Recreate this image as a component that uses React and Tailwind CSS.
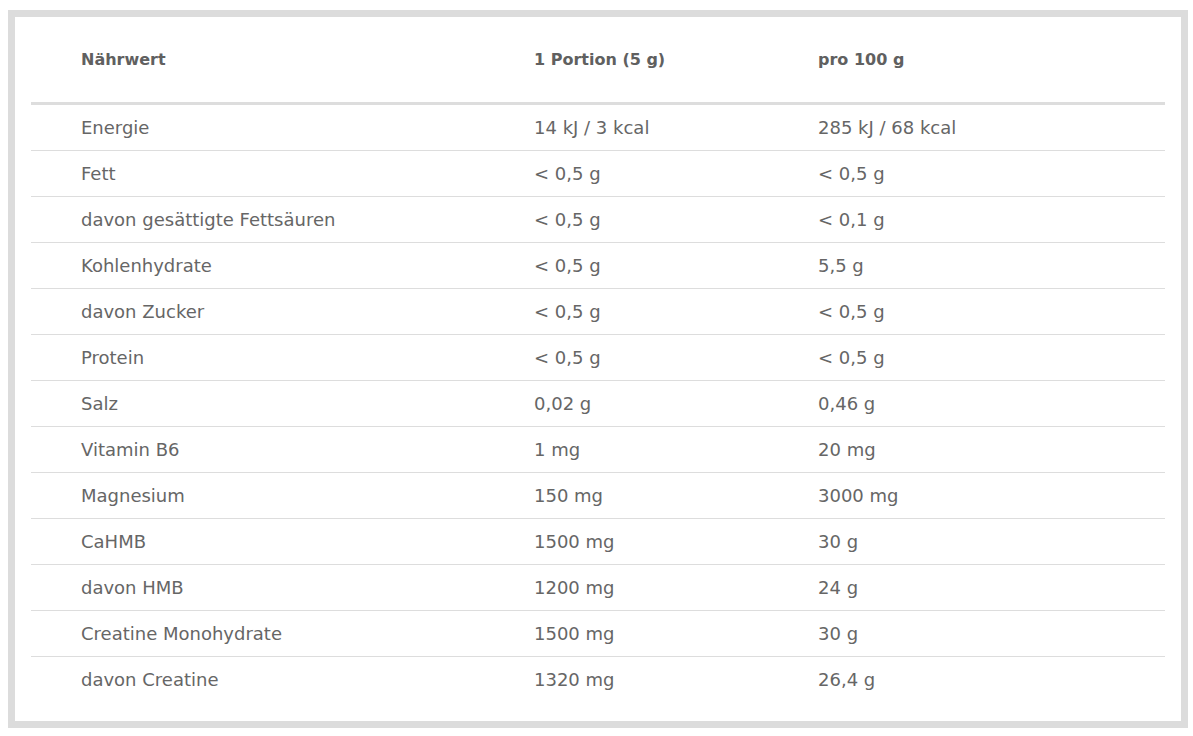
import React from "react";

const rows = [
  ["Energie", "14 kJ / 3 kcal", "285 kJ / 68 kcal"],
  ["Fett", "< 0,5 g", "< 0,5 g"],
  ["davon gesättigte Fettsäuren", "< 0,5 g", "< 0,1 g"],
  ["Kohlenhydrate", "< 0,5 g", "5,5 g"],
  ["davon Zucker", "< 0,5 g", "< 0,5 g"],
  ["Protein", "< 0,5 g", "< 0,5 g"],
  ["Salz", "0,02 g", "0,46 g"],
  ["Vitamin B6", "1 mg", "20 mg"],
  ["Magnesium", "150 mg", "3000 mg"],
  ["CaHMB", "1500 mg", "30 g"],
  ["davon HMB", "1200 mg", "24 g"],
  ["Creatine Monohydrate", "1500 mg", "30 g"],
  ["davon Creatine", "1320 mg", "26,4 g"],
];

export default function App() {
  return (
    <div className="bg-white w-[1193px] h-[736px] pt-[10px] pl-[8px]" style={{ fontFamily: '"DejaVu Sans", "Noto Sans", sans-serif' }}>
      <div className="w-[1180px] h-[718px] border-[7px] border-[#dcdcdc] bg-white pl-[16px] pr-[16px]">
        <div className="flex flex-col text-[#666666] text-[18px]">
          <div className="flex items-center h-[88px] pl-[50px] font-bold text-[16px] text-[#606060] border-b-[3px] border-[#dddddd]">
            <div className="w-[453px]">Nährwert</div>
            <div className="w-[284px]">1 Portion (5 g)</div>
            <div>pro 100 g</div>
          </div>
          {rows.map((r, i) => (
            <div
              key={i}
              className={
                i === rows.length - 1
                  ? "flex items-center h-[45px] pl-[50px]"
                  : "flex items-center h-[46px] pl-[50px] border-b border-[#dddddd]"
              }
            >
              <div className="w-[453px]">{r[0]}</div>
              <div className="w-[284px]">{r[1]}</div>
              <div>{r[2]}</div>
            </div>
          ))}
        </div>
      </div>
    </div>
  );
}
